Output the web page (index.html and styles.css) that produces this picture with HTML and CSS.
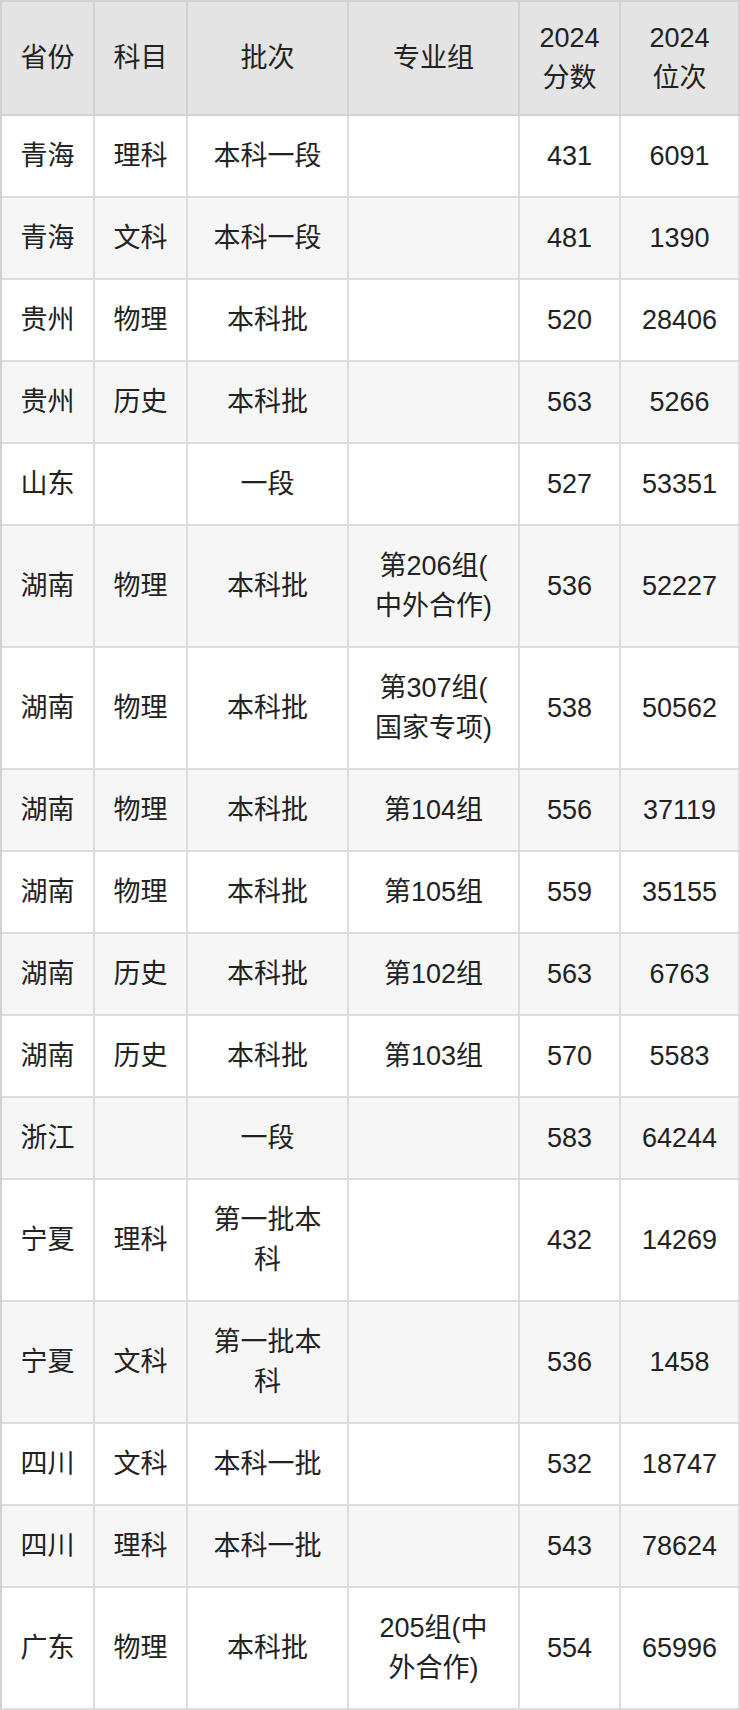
FILE: index.html
```html
<!DOCTYPE html>
<html lang="zh-CN">
<head>
<meta charset="utf-8">
<title>2024 分数位次</title>
<link rel="stylesheet" href="styles.css">
</head>
<body>
<table class="score-table">
  <thead>
    <tr>
      <th class="c1">省份</th>
      <th class="c2">科目</th>
      <th class="c3">批次</th>
      <th class="c4">专业组</th>
      <th class="c5">2024<br>分数</th>
      <th class="c6">2024<br>位次</th>
    </tr>
  </thead>
  <tbody>
    <tr><td>青海</td><td>理科</td><td>本科一段</td><td></td><td>431</td><td>6091</td></tr>
    <tr><td>青海</td><td>文科</td><td>本科一段</td><td></td><td>481</td><td>1390</td></tr>
    <tr><td>贵州</td><td>物理</td><td>本科批</td><td></td><td>520</td><td>28406</td></tr>
    <tr><td>贵州</td><td>历史</td><td>本科批</td><td></td><td>563</td><td>5266</td></tr>
    <tr><td>山东</td><td></td><td>一段</td><td></td><td>527</td><td>53351</td></tr>
    <tr><td>湖南</td><td>物理</td><td>本科批</td><td>第206组(<br>中外合作)</td><td>536</td><td>52227</td></tr>
    <tr><td>湖南</td><td>物理</td><td>本科批</td><td>第307组(<br>国家专项)</td><td>538</td><td>50562</td></tr>
    <tr><td>湖南</td><td>物理</td><td>本科批</td><td>第104组</td><td>556</td><td>37119</td></tr>
    <tr><td>湖南</td><td>物理</td><td>本科批</td><td>第105组</td><td>559</td><td>35155</td></tr>
    <tr><td>湖南</td><td>历史</td><td>本科批</td><td>第102组</td><td>563</td><td>6763</td></tr>
    <tr><td>湖南</td><td>历史</td><td>本科批</td><td>第103组</td><td>570</td><td>5583</td></tr>
    <tr><td>浙江</td><td></td><td>一段</td><td></td><td>583</td><td>64244</td></tr>
    <tr><td>宁夏</td><td>理科</td><td>第一批本<br>科</td><td></td><td>432</td><td>14269</td></tr>
    <tr><td>宁夏</td><td>文科</td><td>第一批本<br>科</td><td></td><td>536</td><td>1458</td></tr>
    <tr><td>四川</td><td>文科</td><td>本科一批</td><td></td><td>532</td><td>18747</td></tr>
    <tr><td>四川</td><td>理科</td><td>本科一批</td><td></td><td>543</td><td>78624</td></tr>
    <tr><td>广东</td><td>物理</td><td>本科批</td><td>205组(中<br>外合作)</td><td>554</td><td>65996</td></tr>
  </tbody>
</table>
</body>
</html>
```

FILE: styles.css
```css
html, body {
  margin: 0;
  padding: 0;
  background: #ffffff;
}

.score-table {
  width: 740px;
  table-layout: fixed;
  border-collapse: separate;
  border-spacing: 0;
  border-left: 2px solid #d2d2d2;
  border-top: 2px solid #d2d2d2;
  font-family: "Liberation Sans", "Noto Sans CJK SC", sans-serif;
  font-size: 27px;
  line-height: 40px;
  color: #222222;
}

.score-table th,
.score-table td {
  box-sizing: border-box;
  text-align: center;
  vertical-align: middle;
  padding: 20px 6px;
  border-right: 2px solid #dddddd;
  border-bottom: 2px solid #dddddd;
  font-weight: normal;
}

.score-table th {
  background: #e4e4e4;
  padding: 16px 6px;
  border-right-color: #d2d2d2;
  border-bottom-color: #d2d2d2;
}

.score-table .c1 { width: 93px; }
.score-table .c2 { width: 93px; }
.score-table .c3 { width: 161px; }
.score-table .c4 { width: 171px; }
.score-table .c5 { width: 101px; }
.score-table .c6 { width: 119px; }

.score-table tbody tr:nth-child(odd) td {
  background: #ffffff;
}

.score-table tbody tr:nth-child(even) td {
  background: #f6f6f6;
}
```
